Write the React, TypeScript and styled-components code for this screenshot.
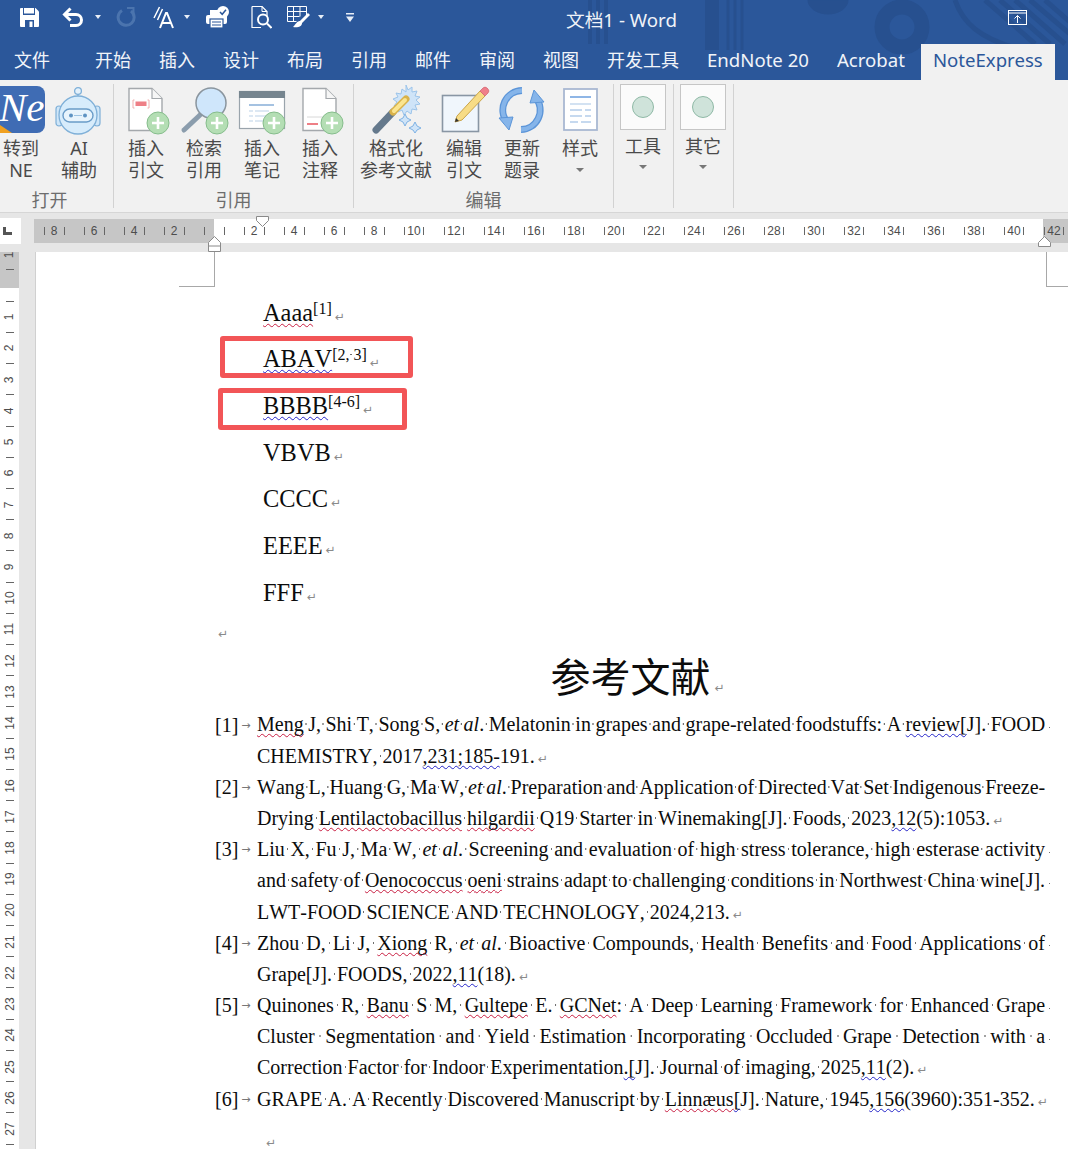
import React from 'react'
import styled, { createGlobalStyle } from 'styled-components'

const GlobalStyle = createGlobalStyle`
    html, body {
        margin: 0;
        padding: 0;
        width: 1068px;
        height: 1149px;
        overflow: hidden;
        background: #fff;
    }
`

const uiFont = `"Noto Sans", "Noto Sans CJK SC", sans-serif`
const docFont = `"Liberation Serif", "Noto Sans CJK SC", serif`

const Shell = styled.div`
    width: 1068px;
    height: 1149px;
    display: flex;
    flex-direction: column;
    overflow: hidden;
    font-family: ${uiFont};
`

const Header = styled.header`
    position: relative;
    height: 80px;
    flex: none;
    background: #2b579a;
    overflow: hidden;
`

const Backdrop = styled.svg`
    position: absolute;
    left: 0;
    top: 0;
`

const TitleRow = styled.div`
    position: relative;
    height: 44px;
    display: flex;
    align-items: flex-start;
`

const Qat = styled.div`
    width: 566px;
    height: 34px;
    flex: none;
    display: flex;
    align-items: center;
    padding-left: 20px;
    box-sizing: border-box;
`

const QatIcon = styled.svg<{ $left?: number }>`
    flex: none;
    margin-left: ${({ $left }) => $left ?? 0}px;
`

const WhiteCaret = styled.span<{ $left: number }>`
    flex: none;
    margin-left: ${({ $left }) => $left}px;
    width: 0;
    height: 0;
    border-left: 3.5px solid transparent;
    border-right: 3.5px solid transparent;
    border-top: 4px solid #e8eef7;
`

const WindowTitle = styled.div`
    height: 40px;
    line-height: 40px;
    color: #f0f3f8;
    font-size: 18.7px;
    white-space: nowrap;
`

const RestoreIcon = styled.svg`
    margin: 10px 41px 0 auto;
    flex: none;
`

const TabRow = styled.nav`
    position: relative;
    height: 36px;
    display: flex;
    align-items: stretch;
    gap: 28px;
    padding-left: 14px;
`

const Tab = styled.div<{ $active?: boolean; $after?: number; $latin?: boolean }>`
    font-size: ${({ $latin }) => ($latin ? 18.6 : 18)}px;
    line-height: 32px;
    color: ${({ $active }) => ($active ? '#2b579a' : '#f1f4f9')};
    white-space: nowrap;
    margin-right: ${({ $after }) => $after ?? 0}px;
    ${({ $active }) => $active && `
        background: #f1f1f1;
        padding: 0 12px;
        margin-left: -12px;
        margin-right: -17px;
    `}
`

const TellMe = styled.svg`
    flex: none;
    margin: 8px 0 0 28px;
`

const Ribbon = styled.section`
    height: 133px;
    flex: none;
    box-sizing: border-box;
    display: flex;
    align-items: stretch;
    background: #f1f1f1;
    border-bottom: 1px solid #d6d6d6;
`

const Group = styled.div<{ $width: number; $shift?: number; $right?: number }>`
    width: ${({ $width }) => $width}px;
    flex: none;
    box-sizing: border-box;
    margin: 4px 0 4px ${({ $shift }) => $shift ?? 0}px;
    padding-right: ${({ $right }) => $right ?? 0}px;
    border-right: 1px solid #d2d2d2;
    display: flex;
    flex-direction: column;
`

const Buttons = styled.div<{ $pad?: number }>`
    flex: 1;
    display: flex;
    align-items: flex-start;
    padding-left: ${({ $pad }) => $pad ?? 0}px;
`

const GroupName = styled.div`
    height: 24px;
    margin-bottom: -4px;
    line-height: 24px;
    text-align: center;
    font-size: 18px;
    color: #6d6d6d;
`

const ToolButton = styled.div<{ $width?: number }>`
    width: ${({ $width }) => $width ?? 58}px;
    flex: none;
    padding-top: 2px;
    display: flex;
    flex-direction: column;
    align-items: center;
`

const WideButton = styled(ToolButton)`
    margin-right: 3px;
`

const ToolIcon = styled.svg`
    flex: none;
    overflow: visible;
`

const Label = styled.div`
    margin-top: 3px;
    width: 100%;
    text-align: center;
    font-size: 18px;
    line-height: 22px;
    color: #4a4a4a;
    white-space: nowrap;
`

const LabelCaret = styled.div`
    width: 0;
    height: 0;
    margin-top: 9px;
    border-left: 4px solid transparent;
    border-right: 4px solid transparent;
    border-top: 4px solid #777;
`

const SlotButton = styled.div`
    width: 58px;
    flex: none;
    display: flex;
    flex-direction: column;
    align-items: center;
`

const Slot = styled.div`
    width: 46px;
    height: 46px;
    box-sizing: border-box;
    background: #fbfbfb;
    border: 1px solid #c6c6c6;
    display: flex;
    align-items: center;
    justify-content: center;
`

const SlotDot = styled.span`
    width: 22px;
    height: 22px;
    box-sizing: border-box;
    border-radius: 50%;
    background: #cfe3da;
    border: 1px solid #8fb9a6;
`

const SlotLabel = styled(Label)`
    margin-top: 5px;
`

const SlotCaret = styled(LabelCaret)`
    margin-top: 8px;
`

const RulerRow = styled.div`
    position: relative;
    height: 39px;
    flex: none;
    display: flex;
    align-items: flex-start;
    background: #e6e6e6;
`

const Corner = styled.div`
    width: 21px;
    height: 26px;
    flex: none;
    box-sizing: border-box;
    padding-left: 3px;
    margin: 5px 13px 0 0;
    background: #fff;
    display: flex;
    align-items: center;
`

const CornerMark = styled.span`
    width: 9px;
    height: 8px;
    box-sizing: border-box;
    border-left: 3px solid #555;
    border-bottom: 3px solid #555;
`

const Track = styled.div`
    flex: 1;
    height: 24px;
    margin-top: 6px;
    display: flex;
    background: linear-gradient(90deg, #c6c6c6 180px, #fff 180px, #fff 1009px, #c6c6c6 1009px);
    overflow: hidden;
`

const Mark = styled.div`
    width: 40px;
    flex: none;
    display: flex;
    justify-content: center;
    align-items: center;
`

const MarkInner = styled.div`
    width: 21px;
    display: flex;
    justify-content: space-between;
    align-items: center;
    font-size: 12px;
    color: #4d4d4d;
    font-family: "Liberation Sans", sans-serif;
`

const Tick = styled.span`
    width: 1px;
    height: 8px;
    background: #666;
`

const IndentMark = styled.svg<{ $x: number; $y: number }>`
    position: absolute;
    left: ${({ $x }) => $x}px;
    top: ${({ $y }) => $y}px;
`

const Workspace = styled.div`
    flex: 1;
    min-height: 0;
    display: flex;
    overflow: hidden;
`

const Gutter = styled.div`
    width: 36px;
    flex: none;
    box-sizing: border-box;
    background: #e6e6e6;
    border-right: 1px solid #d0d0d0;
    overflow: hidden;
`

const VRuler = styled.div`
    width: 19px;
    height: 100%;
    background: linear-gradient(#c6c6c6 36px, #fff 36px);
    overflow: hidden;
`

const VCell = styled.div`
    position: relative;
    height: 31.23px;
    display: flex;
    align-items: center;
    justify-content: center;
    font-size: 12px;
    color: #4d4d4d;
    font-family: "Liberation Sans", sans-serif;

    &:first-child {
        margin-top: -12.8px;
    }

    &::after {
        content: "";
        position: absolute;
        left: 6px;
        bottom: 0;
        width: 8px;
        height: 1px;
        background: #666;
    }
`

const VNum = styled.span`
    transform: rotate(-90deg);
`

const Page = styled.main`
    position: relative;
    flex: 1;
    background: #fff;
    box-sizing: border-box;
    padding: 37.6px 0 0 179px;
    font-family: ${docFont};
    font-kerning: none;
    color: #0c0c0c;
`

const CropMark = styled.span<{ $side: 'left' | 'right' }>`
    position: absolute;
    top: 0;
    height: 35px;
    box-sizing: border-box;
    border-bottom: 1px solid #a8a8a8;
    ${({ $side }) => $side === 'left'
        ? `left: 143px; width: 36px; border-right: 1px solid #a8a8a8;`
        : `left: 1010px; width: 30px; border-left: 1px solid #a8a8a8;`}
`

const DocLine = styled.div`
    position: relative;
    height: 46.7px;
    line-height: 46.7px;
    padding-left: 48px;
    font-size: 24.4px;
    white-space: nowrap;
`

const Sup = styled.span`
    font-size: 16px;
    vertical-align: 7px;
    line-height: 0;
`

const Highlight = styled.span<{ $left: number; $top: number; $width: number }>`
    position: absolute;
    left: ${({ $left }) => $left}px;
    top: ${({ $top }) => $top}px;
    width: ${({ $width }) => $width}px;
    height: 42px;
    box-sizing: border-box;
    border: 5px solid #f25557;
    border-radius: 3px;
`

const EmptyLine = styled.div`
    height: 35px;
    line-height: 35px;
    font-size: 13px;
`

const RefTitle = styled.h1`
    width: 831px;
    height: 55px;
    margin: 0 0 3px;
    line-height: 55px;
    text-align: center;
    font-size: 40px;
    font-weight: 400;
    white-space: nowrap;
`

const RefList = styled.div`
    display: flex;
    flex-direction: column;
`

const RefItem = styled.div`
    display: grid;
    grid-template-columns: 42px 788px;
`

const RefNo = styled.div`
    display: flex;
    align-items: center;
    height: 31.2px;
    font-size: 20px;
    white-space: nowrap;
`

const TabArrow = styled.span`
    margin-left: 3px;
    font-size: 11px;
    color: #777;
    font-family: "DejaVu Sans", sans-serif;
`

const RefLines = styled.div`
    display: flex;
    flex-direction: column;
`

const RefLine = styled.div<{ $justify?: boolean }>`
    height: 31.2px;
    line-height: 31.2px;
    font-size: 20px;
    white-space: ${({ $justify }) => ($justify ? 'normal' : 'nowrap')};
    text-align: ${({ $justify }) => ($justify ? 'justify' : 'left')};
    text-align-last: ${({ $justify }) => ($justify ? 'justify' : 'left')};
    word-spacing: ${({ $justify }) => ($justify ? -2.5 : 0)}px;
`

const Gap = styled.span`
    background: radial-gradient(circle 1px, #6f6f6f 55%, transparent 100%) no-repeat center 62%;
`

const EndDot = styled.span`
    display: inline-block;
    width: 7px;
    height: 8px;
    margin-right: -7px;
    background: radial-gradient(circle 1px, #6f6f6f 55%, transparent 100%) no-repeat right 1px center / 3px 3px;
`

const Para = styled.span`
    margin-left: 3px;
    font-size: 12px;
    color: #8a8a8a;
    font-family: "DejaVu Sans", sans-serif;
`

const TitlePara = styled(Para)`
    display: inline-block;
    width: 12px;
    margin-right: -15px;
`

const Squiggle = styled.span<{ $tone: 'r' | 'b' }>`
    text-decoration: underline wavy ${({ $tone }) => ($tone === 'r' ? '#c81e42' : '#2424c8')} 1.3px;
    text-decoration-skip-ink: none;
    text-underline-offset: 2px;
`

const LastPara = styled.div`
    margin: 13px 0 0 48px;
    line-height: 28px;
`

type Piece = string | { r: string } | { b: string } | { i: string }

const Words = ({ text }: { text: string }) => (
    <>
        {text.split(' ').map((word, i) => (
            <React.Fragment key={i}>
                {i > 0 && <Gap> </Gap>}
                {word}
            </React.Fragment>
        ))}
    </>
)

const Pieces = ({ items }: { items: Piece[] }) => (
    <>
        {items.map((p, i) => {
            if (typeof p === 'string') return <Words key={i} text={p} />
            if ('r' in p) return <Squiggle key={i} $tone="r"><Words text={p.r} /></Squiggle>
            if ('b' in p) return <Squiggle key={i} $tone="b"><Words text={p.b} /></Squiggle>
            return <em key={i}><Words text={p.i} /></em>
        })}
    </>
)

type Line = { items: Piece[]; justify?: boolean; dot?: boolean; para?: boolean }

const refs: { no: string; lines: Line[] }[] = [
    {
        no: '[1]',
        lines: [
            { justify: true, dot: true, items: [{ r: 'Meng' }, ' J, Shi T, Song S', { i: ', et al' }, '. Melatonin in grapes and grape-related foodstuffs: A ', { b: 'review[' }, 'J]. FOOD'] },
            { para: true, items: ['CHEMISTRY, 2017', { b: ',231;185-' }, '191.'] },
        ],
    },
    {
        no: '[2]',
        lines: [
            { justify: true, items: ['Wang L, Huang G, Ma W', { i: ', et al' }, '. Preparation and Application of Directed Vat Set Indigenous Freeze-'] },
            { para: true, items: ['Drying ', { r: 'Lentilactobacillus' }, ' ', { r: 'hilgardii' }, ' Q19 Starter in Winemaking[J]. Foods, 2023', { b: ',12' }, '(5):1053.'] },
        ],
    },
    {
        no: '[3]',
        lines: [
            { justify: true, dot: true, items: ['Liu X, Fu J, Ma W', { i: ', et al' }, '. Screening and evaluation of high stress tolerance, high esterase activity'] },
            { justify: true, dot: true, items: ['and safety of ', { r: 'Oenococcus' }, ' ', { r: 'oeni' }, ' strains adapt to challenging conditions in Northwest China wine[J].'] },
            { para: true, items: ['LWT-FOOD SCIENCE AND TECHNOLOGY, 2024,213.'] },
        ],
    },
    {
        no: '[4]',
        lines: [
            { justify: true, dot: true, items: ['Zhou D, Li J, ', { r: 'Xiong' }, ' R', { i: ', et al' }, '. Bioactive Compounds, Health Benefits and Food Applications of'] },
            { para: true, items: ['Grape[J]. FOODS, 2022', { b: ',11' }, '(18).'] },
        ],
    },
    {
        no: '[5]',
        lines: [
            { justify: true, dot: true, items: ['Quinones R, ', { r: 'Banu' }, ' S M, ', { r: 'Gultepe' }, ' E. ', { r: 'GCNet' }, ': A Deep Learning Framework for Enhanced Grape'] },
            { justify: true, dot: true, items: ['Cluster Segmentation and Yield Estimation Incorporating Occluded Grape Detection with a'] },
            { para: true, items: ['Correction Factor for Indoor Experimentation', { b: '.[' }, 'J]. Journal of imaging, 2025', { b: ',11' }, '(2).'] },
        ],
    },
    {
        no: '[6]',
        lines: [
            { para: true, items: ['GRAPE A. A Recently Discovered Manuscript by ', { r: 'Linnæus' }, { b: '[' }, 'J]. Nature, 1945', { b: ',156' }, '(3960):351-352.'] },
        ],
    },
]

const rulerLabels = ['8', '6', '4', '2', '', '2', '4', '6', '8', '10', '12', '14', '16', '18', '20', '22', '24', '26', '28', '30', '32', '34', '36', '38', '40', '42']
const vLabels = ['1', '', ...Array.from({ length: 27 }, (_, i) => String(i + 1))]

const PlusBadge = ({ cx = 41, cy = 37 }: { cx?: number; cy?: number }) => (
    <g>
        <circle cx={cx} cy={cy} r="11" fill="#b4deb4" stroke="#86bd8c" strokeWidth="1" />
        <path d={`M${cx - 6} ${cy}h12M${cx} ${cy - 6}v12`} stroke="#fff" strokeWidth="2.6" />
    </g>
)

const DocSheet = ({ x }: { x: number }) => (
    <path d={`M${x} 2.5h23l10 10v32h-33z`} fill="#fff" stroke="#a4a8ac" strokeWidth="1.4" />
)

const Fold = ({ x }: { x: number }) => (
    <path d={`M${x + 23} 2.5v10h10`} fill="#f6f6f6" stroke="#a4a8ac" strokeWidth="1.2" />
)

const NeLogo = () => (
    <ToolIcon width="58" height="48" viewBox="0 0 58 48">
        <rect x="-2" y="0" width="55" height="47" rx="8" fill="#3f6cb4" />
        <path d="M8 39l12 8H8z" fill="#f0a020" />
        <text x="7" y="35" fill="#fff" fontFamily="Liberation Serif" fontStyle="italic" fontSize="41">Ne</text>
    </ToolIcon>
)

const RobotIcon = () => (
    <ToolIcon width="58" height="48" viewBox="0 0 58 48">
        <circle cx="28" cy="5" r="3.4" fill="#e4f1fb" stroke="#7fb0d8" strokeWidth="1.3" />
        <path d="M28 8v5" stroke="#7fb0d8" strokeWidth="1.4" />
        <rect x="6" y="20" width="6" height="20" rx="3" fill="#cfe6f8" stroke="#7fb0d8" strokeWidth="1.2" />
        <rect x="44" y="20" width="6" height="20" rx="3" fill="#cfe6f8" stroke="#7fb0d8" strokeWidth="1.2" />
        <circle cx="28" cy="29" r="19" fill="#d7ecfb" stroke="#7fb0d8" strokeWidth="1.3" />
        <rect x="13" y="23" width="30" height="13" rx="6.5" fill="#e8f4fc" stroke="#6a9cc8" strokeWidth="1.4" />
        <circle cx="21" cy="29.5" r="2" fill="#5e93c2" />
        <circle cx="35" cy="29.5" r="2" fill="#5e93c2" />
        <path d="M24 29.5h8" stroke="#9cc3e2" strokeWidth="1" />
    </ToolIcon>
)

const InsertCiteIcon = () => (
    <ToolIcon width="58" height="48" viewBox="0 0 58 48">
        <DocSheet x={12} />
        <Fold x={12} />
        <path d="M17.5 14h-1.5v8h1.5M30.500 14h1.500v8h-1.500" fill="none" stroke="#f0b0b0" strokeWidth="1" />
        <rect x="18.500" y="15.500" width="11" height="4.500" fill="#ee7f86" />
        <PlusBadge />
    </ToolIcon>
)

const SearchCiteIcon = () => (
    <ToolIcon width="58" height="48" viewBox="0 0 58 48">
        <path d="M25 29L9 44" stroke="#8b9dad" strokeWidth="5" strokeLinecap="round" />
        <circle cx="36" cy="17" r="15" fill="#cfe6fb" stroke="#8a959e" strokeWidth="1.5" />
        <PlusBadge cx={42} />
    </ToolIcon>
)

const InsertNoteIcon = () => (
    <ToolIcon width="58" height="48" viewBox="0 0 58 48">
        <rect x="6.500" y="5.500" width="45" height="37" fill="#fff" stroke="#9aa4ac" strokeWidth="1.2" />
        <rect x="6" y="5" width="46" height="7" fill="#76858f" />
        <path d="M16 19h25" stroke="#8fb3da" strokeWidth="1.6" />
        <path d="M16 25h4M22 25h14M16 30h4M22 30h12M16 35h4M22 35h10" stroke="#bcd2e8" strokeWidth="1.2" />
        <PlusBadge />
    </ToolIcon>
)

const InsertNoticeIcon = () => (
    <ToolIcon width="58" height="48" viewBox="0 0 58 48">
        <DocSheet x={12} />
        <Fold x={12} />
        <path d="M16 38h11" stroke="#ee7f86" strokeWidth="2" />
        <path d="M16 31h18" stroke="#d8d8d8" strokeWidth="1" />
        <PlusBadge />
    </ToolIcon>
)

const WandIcon = () => (
    <ToolIcon width="72" height="48" viewBox="0 0 72 48">
        <path d="M46 -1l2 5 4-3 0 5 5-1-2 5 5 1-4 3 4 4-5 1 2 5-5-1-1 5-4-3-3 4-2-5-4 2 1-5-5-1 3-4-4-3 5-2-2-4 5 1 1-5 4 3z" fill="#cfe4f8" stroke="#9cc4ea" strokeWidth="1" />
        <path d="M16 44l17-18" stroke="#65798c" strokeWidth="7" strokeLinecap="round" />
        <path d="M33 26l13-13" stroke="#d9b24a" strokeWidth="7" strokeLinecap="round" />
        <path d="M34 25l11-11" stroke="#fbe58f" strokeWidth="4" strokeLinecap="round" />
        <path d="M45 28l2 4 4 2-4 2-2 4-2-4-4-2 4-2z" fill="#cfe4f8" stroke="#7fb2e4" strokeWidth="1" />
        <path d="M55 36l2 4 4 2-4 2-2 3-2-3-4-2 4-2z" fill="#cfe4f8" stroke="#7fb2e4" strokeWidth="1" />
    </ToolIcon>
)

const EditCiteIcon = () => (
    <ToolIcon width="58" height="48" viewBox="0 0 58 48">
        <rect x="7.500" y="9.500" width="36" height="36" fill="#f0f6fc" stroke="#8996a4" strokeWidth="1.6" />
        <path d="M45 5L22 30l-2 6 7-2L50 10z" fill="#f7dc86" stroke="#c9a44a" strokeWidth="1" />
        <path d="M20 36l1-4 3 3z" fill="#333" />
        <path d="M45 5l3-3a3 3 0 014 0l1 1a3 3 0 010 4l-3 3z" fill="#ef7f8a" stroke="#d46a74" strokeWidth="0.8" />
    </ToolIcon>
)

const RefreshIcon = () => (
    <ToolIcon width="58" height="48" viewBox="0 0 58 48">
        <g fill="none" strokeWidth="7">
            <path d="M29 4.500A19.500 19.500 0 0 0 14 36" stroke="#5c95d8" />
            <path d="M28 43.500A19.500 19.500 0 0 0 43 12" stroke="#5c95d8" />
        </g>
        <g fill="none" strokeWidth="4.500">
            <path d="M29 4.500A19.500 19.500 0 0 0 14 36" stroke="#86b5ea" />
            <path d="M28 43.500A19.500 19.500 0 0 0 43 12" stroke="#86b5ea" />
        </g>
        <path d="M6 32l14-1-4 13z" fill="#86b5ea" stroke="#5c95d8" strokeWidth="1" />
        <path d="M51 16l-14 1 4-13z" fill="#86b5ea" stroke="#5c95d8" strokeWidth="1" />
    </ToolIcon>
)

const StyleIcon = () => (
    <ToolIcon width="58" height="48" viewBox="0 0 58 48">
        <rect x="13" y="3" width="33" height="41" fill="#fff" stroke="#a9b8d2" strokeWidth="1.800" />
        <path d="M19 11h21" stroke="#8fb6e6" strokeWidth="2" />
        <path d="M19 18h21" stroke="#c4d8ee" strokeWidth="1.500" />
        <path d="M19 24h12M34 24h6M19 30h12M34 30h6M19 36h8M30 36h10" stroke="#b4cdea" strokeWidth="1.300" />
    </ToolIcon>
)

const App = () => {
    return (
        <Shell>
            <GlobalStyle />
            <Header>
                <Backdrop width="1068" height="80" viewBox="0 0 1068 80" fill="none">
                    <g stroke="#27508f">
                        <path d="M590 0v44M598 0v44M606 0v44" strokeWidth="4" />
                        <path d="M712 0v50" strokeWidth="14" />
                        <path d="M728 0v50M735 0v50M742 0v50" strokeWidth="3" />
                        <path d="M808 0a20 14 0 0 0 40 0z" fill="#27508f" />
                        <circle cx="902" cy="27" r="20" strokeWidth="15" />
                        <path d="M955 0c8 24 26 38 60 48M985 0l50 44M1000 0l50 44M1015 0l50 44M1030 0l40 34M1045 0l25 22" strokeWidth="5" />
                    </g>
                </Backdrop>
                <TitleRow>
                    <Qat>
                        <QatIcon width="19" height="19" viewBox="0 0 19 19">
                            <path d="M0 1a1 1 0 011-1h14.500L19 3.500V18a1 1 0 01-1 1H1a1 1 0 01-1-1z" fill="#fff" />
                            <rect x="3" y="0" width="12" height="7" fill="#2b579a" />
                            <rect x="4" y="0" width="10" height="5.500" fill="#fff" />
                            <rect x="5" y="12" width="9" height="7" fill="#2b579a" />
                            <rect x="9.500" y="13.500" width="3" height="5.500" fill="#fff" />
                        </QatIcon>
                        <QatIcon $left={23} width="21" height="20" viewBox="0 0 21 20" fill="none">
                            <path d="M3 7.500h11a5.500 5.500 0 010 11H8" stroke="#fff" strokeWidth="3" />
                            <path d="M8.500 1.500l-6 6 6 6" stroke="#fff" strokeWidth="3" />
                        </QatIcon>
                        <WhiteCaret $left={12} />
                        <QatIcon $left={15} width="20" height="20" viewBox="0 0 20 20" fill="none">
                            <path d="M6 3.500A8 8 0 1 0 15 4" stroke="#4b74ae" strokeWidth="3" />
                            <path d="M11 1h6.500v7" stroke="#4b74ae" strokeWidth="2" />
                        </QatIcon>
                        <QatIcon $left={17} width="21" height="23" viewBox="0 0 21 23" fill="none">
                            <path d="M1 12L6.500 1M4.500 14L9.500 3" stroke="#fff" strokeWidth="1.500" />
                            <path d="M7 22L13 7h1l6 15M9.500 17h9" stroke="#fff" strokeWidth="2" />
                        </QatIcon>
                        <WhiteCaret $left={10} />
                        <QatIcon $left={16} width="23" height="22" viewBox="0 0 23 22">
                            <rect x="4" y="4" width="13" height="7" fill="#fff" />
                            <rect x="0" y="9" width="21" height="9" rx="2" fill="#fff" />
                            <rect x="4" y="13" width="13" height="9" fill="#fff" stroke="#2b579a" strokeWidth="1.200" />
                            <path d="M6 16h9M6 19h9" stroke="#2b579a" strokeWidth="1" />
                            <circle cx="17" cy="6" r="6" fill="#fff" />
                            <path d="M14 6l2.200 2.300L20 3.800" fill="none" stroke="#2b579a" strokeWidth="1.500" />
                        </QatIcon>
                        <QatIcon $left={22} width="21" height="23" viewBox="0 0 21 23" fill="none">
                            <path d="M1 .5h10l5 5v5M1 .5v21h9" stroke="#fff" strokeWidth="1.200" />
                            <path d="M11 .5v5h5" stroke="#fff" strokeWidth="1" />
                            <circle cx="12" cy="13.500" r="5" stroke="#fff" strokeWidth="2" />
                            <path d="M16 17.500l4.500 4.500" stroke="#fff" strokeWidth="2" />
                        </QatIcon>
                        <QatIcon $left={15} width="23" height="23" viewBox="0 0 23 23" fill="none">
                            <path d="M.5.500h19v9M.5.500v15h9M.5 5.500h19M.5 10.500h12M6.500.500v15M13 .500v10" stroke="#fff" strokeWidth="1" />
                            <path d="M22 8L13 17" stroke="#fff" strokeWidth="3" />
                            <path d="M13 15c-3 0-4 3-7 6 4 1 9 0 9-4z" fill="#fff" />
                        </QatIcon>
                        <WhiteCaret $left={8} />
                        <QatIcon $left={22} width="8" height="9" viewBox="0 0 8 9">
                            <path d="M0 0h8v1.500H0zM0 3.500h8L4 9z" fill="#e8eef7" />
                        </QatIcon>
                    </Qat>
                    <WindowTitle>文档1 - Word</WindowTitle>
                    <RestoreIcon width="19" height="15" viewBox="0 0 19 15" fill="none">
                        <rect x=".5" y=".5" width="18" height="14" stroke="#fff" />
                        <path d="M.5 3h18" stroke="#fff" />
                        <path d="M9.500 13V5.500M6.500 8.500l3-3 3 3" stroke="#fff" />
                    </RestoreIcon>
                </TitleRow>
                <TabRow>
                    <Tab $after={17}>文件</Tab>
                    <Tab>开始</Tab>
                    <Tab>插入</Tab>
                    <Tab>设计</Tab>
                    <Tab>布局</Tab>
                    <Tab>引用</Tab>
                    <Tab>邮件</Tab>
                    <Tab>审阅</Tab>
                    <Tab>视图</Tab>
                    <Tab>开发工具</Tab>
                    <Tab $latin>EndNote 20</Tab>
                    <Tab $latin>Acrobat</Tab>
                    <Tab $latin $active>NoteExpress</Tab>
                    <TellMe width="16" height="18" viewBox="0 0 16 18" fill="none">
                        <circle cx="8" cy="8" r="6" stroke="#e8eef7" strokeWidth="1.500" />
                    </TellMe>
                </TabRow>
            </Header>

            <Ribbon>
                <Group $width={121} $shift={-7} $right={7}>
                    <Buttons>
                        <ToolButton $width={56}>
                            <NeLogo />
                            <Label>转到<br />NE</Label>
                        </ToolButton>
                        <ToolButton $width={60}>
                            <RobotIcon />
                            <Label>AI<br />辅助</Label>
                        </ToolButton>
                    </Buttons>
                    <GroupName>打开</GroupName>
                </Group>
                <Group $width={240}>
                    <Buttons $pad={3}>
                        <ToolButton>
                            <InsertCiteIcon />
                            <Label>插入<br />引文</Label>
                        </ToolButton>
                        <ToolButton>
                            <SearchCiteIcon />
                            <Label>检索<br />引用</Label>
                        </ToolButton>
                        <ToolButton>
                            <InsertNoteIcon />
                            <Label>插入<br />笔记</Label>
                        </ToolButton>
                        <ToolButton>
                            <InsertNoticeIcon />
                            <Label>插入<br />注释</Label>
                        </ToolButton>
                    </Buttons>
                    <GroupName>引用</GroupName>
                </Group>
                <Group $width={260}>
                    <Buttons $pad={6}>
                        <WideButton $width={72}>
                            <WandIcon />
                            <Label>格式化<br />参考文献</Label>
                        </WideButton>
                        <ToolButton>
                            <EditCiteIcon />
                            <Label>编辑<br />引文</Label>
                        </ToolButton>
                        <ToolButton>
                            <RefreshIcon />
                            <Label>更新<br />题录</Label>
                        </ToolButton>
                        <ToolButton>
                            <StyleIcon />
                            <Label>样式</Label>
                            <LabelCaret />
                        </ToolButton>
                    </Buttons>
                    <GroupName>编辑</GroupName>
                </Group>
                <Group $width={60}>
                    <Buttons>
                        <SlotButton>
                            <Slot><SlotDot /></Slot>
                            <SlotLabel>工具</SlotLabel>
                            <SlotCaret />
                        </SlotButton>
                    </Buttons>
                </Group>
                <Group $width={60}>
                    <Buttons>
                        <SlotButton>
                            <Slot><SlotDot /></Slot>
                            <SlotLabel>其它</SlotLabel>
                            <SlotCaret />
                        </SlotButton>
                    </Buttons>
                </Group>
            </Ribbon>

            <RulerRow>
                <Corner><CornerMark /></Corner>
                <Track>
                    {rulerLabels.map((label, i) => (
                        <Mark key={i}>
                            <MarkInner>
                                <Tick />
                                {label}
                                <Tick />
                            </MarkInner>
                        </Mark>
                    ))}
                </Track>
                <IndentMark $x={256} $y={3} width="13" height="11" viewBox="0 0 13 11">
                    <path d="M.5.500h12v4l-6 6-6-6z" fill="#fff" stroke="#8a8a8a" />
                </IndentMark>
                <IndentMark $x={208} $y={23} width="13" height="16" viewBox="0 0 13 16">
                    <path d="M.5 6.500l6-6 6 6v9H.5z" fill="#fff" stroke="#8a8a8a" />
                    <path d="M.5 10h12" stroke="#8a8a8a" />
                </IndentMark>
                <IndentMark $x={1038} $y={23} width="13" height="11" viewBox="0 0 13 11">
                    <path d="M.5 6.500l6-6 6 6v4H.5z" fill="#fff" stroke="#8a8a8a" />
                </IndentMark>
            </RulerRow>

            <Workspace>
                <Gutter>
                    <VRuler>
                        {vLabels.map((label, i) => (
                            <VCell key={i}><VNum>{label}</VNum></VCell>
                        ))}
                    </VRuler>
                </Gutter>
                <Page>
                    <CropMark $side="left" />
                    <CropMark $side="right" />
                    <DocLine>
                        <Squiggle $tone="r">Aaaa</Squiggle><Sup>[1]</Sup><Para>↵</Para>
                    </DocLine>
                    <DocLine>
                        <Squiggle $tone="b">ABAV</Squiggle><Sup><Words text="[2, 3]" /></Sup><Para>↵</Para>
                        <Highlight $left={5} $top={0} $width={193} />
                    </DocLine>
                    <DocLine>
                        <Squiggle $tone="b">BBBB</Squiggle><Sup>[4-6]</Sup><Para>↵</Para>
                        <Highlight $left={3} $top={5} $width={189} />
                    </DocLine>
                    <DocLine>VBVB<Para>↵</Para></DocLine>
                    <DocLine>CCCC<Para>↵</Para></DocLine>
                    <DocLine>EEEE<Para>↵</Para></DocLine>
                    <DocLine>FFF<Para>↵</Para></DocLine>
                    <EmptyLine><Para>↵</Para></EmptyLine>
                    <RefTitle>参考文献<TitlePara>↵</TitlePara></RefTitle>
                    <RefList>
                        {refs.map(ref => (
                            <RefItem key={ref.no}>
                                <RefNo>{ref.no}<TabArrow>→</TabArrow></RefNo>
                                <RefLines>
                                    {ref.lines.map((line, i) => (
                                        <RefLine key={i} $justify={line.justify}>
                                            <Pieces items={line.items} />
                                            {line.dot && <EndDot />}
                                            {line.para && <Para>↵</Para>}
                                        </RefLine>
                                    ))}
                                </RefLines>
                            </RefItem>
                        ))}
                    </RefList>
                    <LastPara><Para>↵</Para></LastPara>
                </Page>
            </Workspace>
        </Shell>
    )
}

export default App
